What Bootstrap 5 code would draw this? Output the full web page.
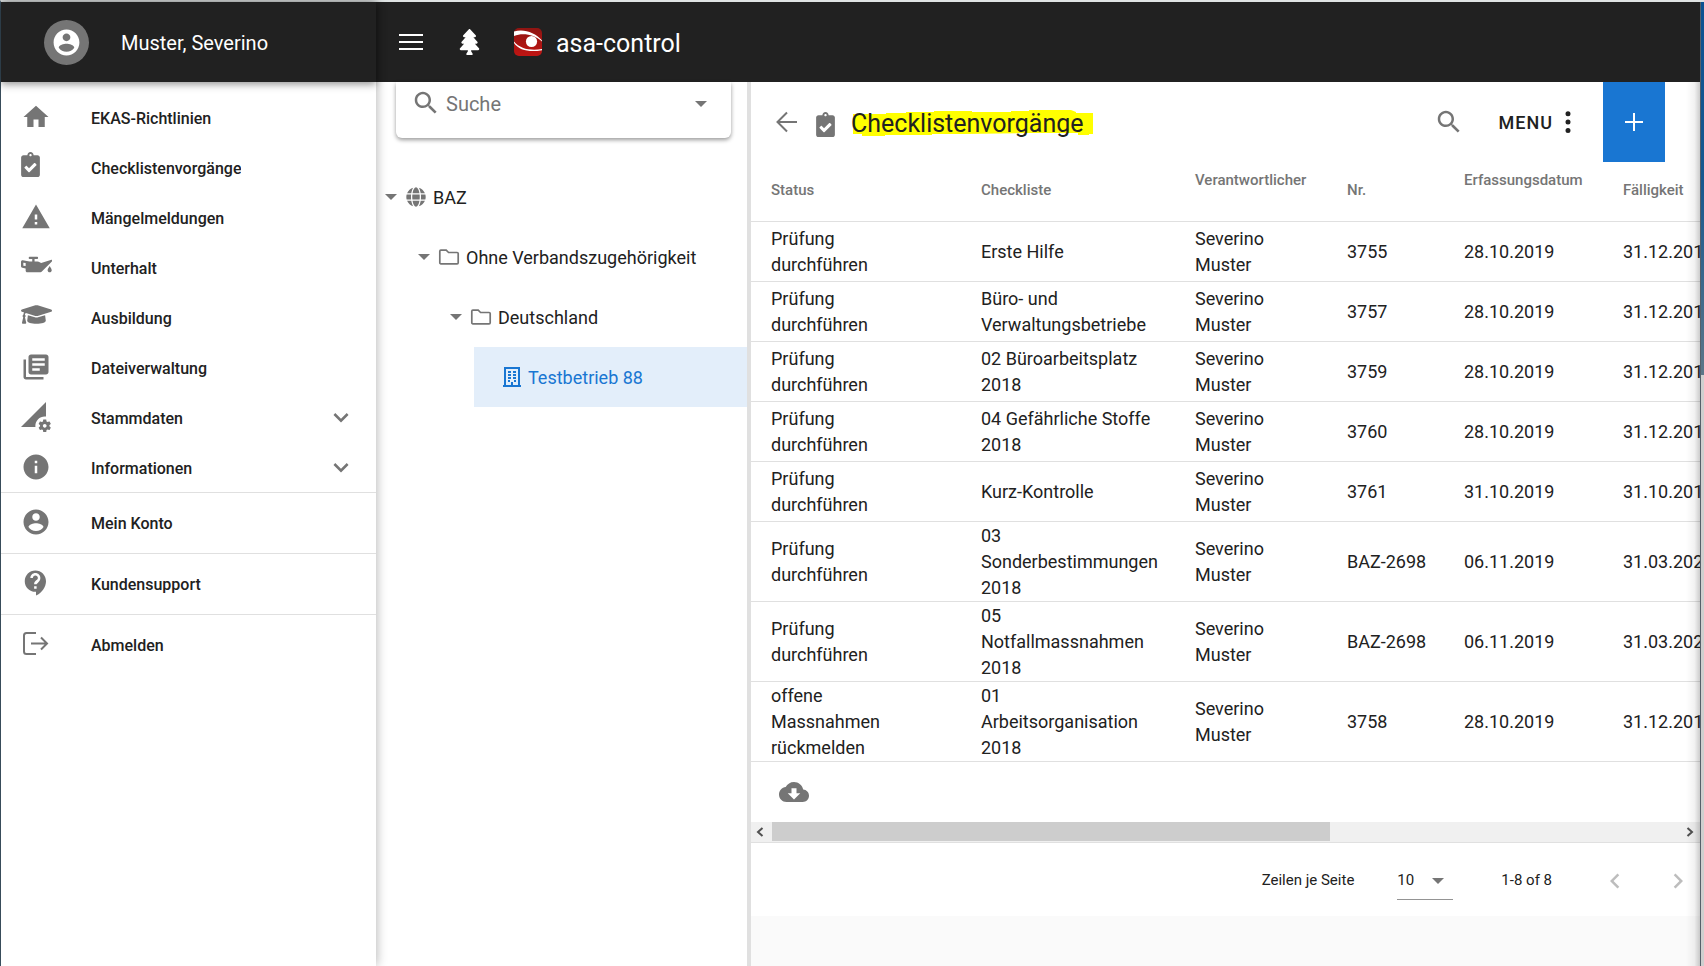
<!DOCTYPE html>
<html lang="de">
<head>
<meta charset="utf-8">
<meta name="viewport" content="width=device-width, initial-scale=1">
<title>asa-control – Checklistenvorgänge</title>
<link href="https://cdn.jsdelivr.net/npm/bootstrap@5.3.0/dist/css/bootstrap.min.css" rel="stylesheet">
<style>
:root { --ink: #212121; --muted: #757575; --rule: #e0e0e0; --accent: #1976d2; }
body { font-family: Roboto, sans-serif; color: var(--ink); background: #fafafa; overflow-x: hidden; }
svg { fill: currentColor; flex: none; display: block; }
button { font-family: inherit; color: inherit; }
.window-frame { min-height: 100vh; border-top: 2px solid #dfe3e3; border-left: 1px solid #3f5666; }
.desktop-edge { width: 4px; border-left: 1px solid #56606a; background: linear-gradient(#0d5191 0, #17588f 180px, #5c7688 373px, #cfcfcf 373px); }
.side-panel, .tree-panel { width: 375px; flex: none; background: #fff; }
.side-panel { z-index: 3; box-shadow: 1px 0 10px rgba(0,0,0,.28); }
.bar { height: 80px; background: #212121; color: #fff; flex: none; }
.side-bar { box-shadow: 0 2px 8px rgba(0,0,0,.45); }
.avatar { width: 45px; height: 45px; background: var(--muted); margin-left: 43px; }
.user-name { font-size: 20px; margin-left: 32px; padding-top: 2px; }
.top-bar { padding-left: 23px; }
.brand-logo { margin-left: 10px; }
.app-name { font-size: 25px; padding-top: 3px; margin-left: 14px; }
.ico { color: var(--muted); }
.side-links { padding-top: 11px; }
.side-item { height: 50px; padding: 0 20px; gap: 40px; font-size: 16px; font-weight: 500; color: var(--ink); text-decoration: none; background: none; border: 0; width: 100%; text-align: left; }
.side-item.tall { height: 61px; border-top: 1px solid var(--rule); }
.side-item.tall:nth-of-type(7) { margin-top: -1px; }
.side-item .icon-cell { width: 30px; height: 32px; }
.side-item .caption { line-height: 18px; margin-top: 2px; }
.tree-panel { border-right: 4px solid var(--rule); }
.search-card { height: 56px; margin: 0 16px 29px 20px; padding: 0 15px; border-radius: 0 0 6px 6px; box-shadow: 0 2px 4px rgba(0,0,0,.4); }
.search-card label { margin-bottom: 14px; }
.search-card input { border: 0; outline: 0; background: none; font-size: 20px; padding: 0 0 12px 5px; min-width: 0; color: var(--ink); }
.search-card input::placeholder { color: var(--muted); opacity: 1; }
.caret { width: 0; height: 0; border: 6px solid transparent; border-top-color: var(--muted); border-bottom: 0; }
.search-card .caret { margin: 0 9px 13px 0; }
.tree-row { height: 60px; font-size: 18px; border: 0; background: none; padding: 0 0 0 9px; width: 100%; text-align: left; white-space: nowrap; }
.tree-row .caret { margin-right: 8px; }
.tree-row svg { margin-right: 6px; }
.level-2 { padding-left: 42px; }
.level-3 { padding-left: 74px; }
.level-4 { margin-left: 98px; width: auto; padding-left: 28px; background: #e3eefa; color: var(--accent); }
.main-panel { background: #fff; }
.title-bar { height: 80px; padding-left: 21px; }
.title-icon { margin-left: 14px; }
.title-text { font-size: 25px; font-weight: 400; line-height: 32px; margin: 4px 0 0 16px; }
.marker { position: absolute; left: 0; top: 0; width: 244px; height: 32px; fill: #ff0; z-index: -1; }
.menu-btn { font-size: 18px; font-weight: 500; letter-spacing: 1px; background: none; border: 0; padding: 0; margin: 0 20px 0 11px; }
.add-btn { width: 62px; height: 80px; background: var(--accent); color: #fff; border: 0; margin-right: 35px; }
.list-table { width: 1080px; table-layout: fixed; font-size: 18px; line-height: 26px; border-collapse: separate; border-spacing: 0; }
.list-table th { height: 60px; padding: 18px 0 0 20px; font-size: 15px; line-height: 20px; font-weight: 500; color: var(--muted); border-bottom: 1px solid var(--rule); vertical-align: top; }
.list-table th.upper { padding-top: 8px; }
.list-table td { height: 60px; padding: 0 0 0 20px; border-bottom: 1px solid var(--rule); vertical-align: middle; white-space: nowrap; }
.list-table tr.three td { height: 80px; }
.export-row { height: 60px; padding-left: 28px; }
.hscroll { height: 21px; background: #f0f0f0; border-bottom: 1px solid var(--rule); color: #505050; }
.hscroll-thumb { height: 19px; width: 61.5%; background: #cdcdcd; margin-bottom: 1px; }
.hscroll .end { width: 21px; height: 20px; }
.hscroll .end:first-child { padding-right: 3px; }
.pager { height: 73px; font-size: 15px; padding-top: 2px; }
.pager-size { margin: 0 48px 0 43px; }
.pager select { width: 56px; height: 38px; border: 0; border-bottom: 1px solid #949494; appearance: none; background: none; font-size: 15px; color: var(--ink); padding: 0; outline: 0; border-radius: 0; }
.pager .caret { position: absolute; right: 9px; top: 16px; pointer-events: none; }
.pager button { border: 0; background: none; padding: 0; color: #bdbdbd; }
.pager-next { margin: 0 7px 0 33px; }
.right-side { min-width: 0; }
.edge-shade { position: absolute; right: 0; top: 80px; bottom: 0; width: 14px; background: linear-gradient(to right, rgba(0,0,0,0), rgba(0,0,0,.05) 60%, rgba(0,0,0,.2)); pointer-events: none; }
</style>
</head>
<body>
<svg width="0" height="0" class="position-absolute" aria-hidden="true">
  <symbol id="clip" viewBox="0 0 384 512"><path d="M336 64h-80c0-35.300-28.700-64-64-64s-64 28.700-64 64H48C21.500 64 0 85.500 0 112v352c0 26.500 21.500 48 48 48h288c26.500 0 48-21.500 48-48V112c0-26.500-21.500-48-48-48zM192 40c13.300 0 24 10.700 24 24s-10.700 24-24 24-24-10.700-24-24 10.700-24 24-24zm121.200 231.800l-143 141.800c-4.700 4.700-12.300 4.600-17-.1l-82.600-83.300c-4.700-4.700-4.600-12.300.1-17L99.100 285c4.700-4.700 12.300-4.600 17 .1l46 46.400 106-105.200c4.700-4.700 12.300-4.600 17 .1l28.200 28.400c4.700 4.800 4.600 12.300-.1 17z"/></symbol>
  <symbol id="account" viewBox="0 0 24 24"><path d="M12 2C6.480 2 2 6.480 2 12s4.480 10 10 10 10-4.480 10-10S17.520 2 12 2zm0 3c1.660 0 3 1.340 3 3s-1.340 3-3 3-3-1.340-3-3 1.340-3 3-3zm0 14.200c-2.500 0-4.710-1.280-6-3.220.03-1.990 4-3.080 6-3.080 1.990 0 5.970 1.090 6 3.080-1.290 1.940-3.500 3.220-6 3.220z"/></symbol>
  <symbol id="search" viewBox="0 0 24 24"><path d="M15.500 14h-.79l-.28-.27C15.410 12.590 16 11.110 16 9.500 16 5.910 13.090 3 9.500 3S3 5.910 3 9.500 5.910 16 9.500 16c1.610 0 3.090-.59 4.230-1.570l.27.28v.79l5 4.990L20.490 19l-4.990-5zm-6 0C7.010 14 5 11.990 5 9.500S7.010 5 9.500 5 14 7.010 14 9.500 11.990 14 9.500 14z"/></symbol>
  <symbol id="down" viewBox="0 0 24 24"><path d="M7.410 8.090L12 12.670l4.590-4.580L18 9.500l-6 6-6-6z"/></symbol>
  <symbol id="left" viewBox="0 0 24 24"><path d="M15.410 7.410L14 6l-6 6 6 6 1.410-1.410L10.830 12z"/></symbol>
  <symbol id="right" viewBox="0 0 24 24"><path d="M10 6L8.590 7.410 13.170 12l-4.580 4.590L10 18l6-6z"/></symbol>
  <symbol id="folder" viewBox="0 0 22 22"><path d="M1.800 16.700V5.300c0-.7.400-1.100 1.100-1.100h5.300l2.400 2.300h8.500c.7 0 1.100.4 1.100 1.100v9.100c0 .7-.4 1.100-1.100 1.100H2.900c-.7 0-1.100-.4-1.100-1.100z" fill="none" stroke="currentColor" stroke-width="1.700"/></symbol>
</svg>

<div class="window-frame d-flex">
  <aside class="side-panel d-flex flex-column position-relative">
    <div class="bar side-bar d-flex align-items-center">
      <span class="avatar rounded-circle d-flex align-items-center justify-content-center"><svg width="31" height="31"><use href="#account"/></svg></span>
      <span class="user-name">Muster, Severino</span>
    </div>
    <nav class="side-links" aria-label="Hauptnavigation">
      <a href="#" class="side-item d-flex align-items-center"><span class="icon-cell ico d-flex"><svg width="30" height="30" viewBox="0 0 24 24"><path d="M10 20v-6h4v6h5v-8h3L12 3 2 12h3v8z"/></svg></span><span class="caption overflow-hidden">EKAS-Richtlinien</span></a>
      <a href="#" class="side-item d-flex align-items-center"><span class="icon-cell ico d-flex"><svg width="19" height="25"><use href="#clip"/></svg></span><span class="caption overflow-hidden">Checklistenvorgänge</span></a>
      <a href="#" class="side-item d-flex align-items-center"><span class="icon-cell ico d-flex"><svg width="30" height="30" viewBox="0 0 24 24"><path d="M1 21h22L12 2 1 21zm12-3h-2v-2h2v2zm0-4h-2v-4h2v4z"/></svg></span><span class="caption overflow-hidden">Mängelmeldungen</span></a>
      <a href="#" class="side-item d-flex align-items-center"><span class="icon-cell ico d-flex"><svg width="31" height="25" viewBox="0 0 640 512"><path d="M629.800 160.310L416 224l-50.490-25.240a64.070 64.070 0 0 0-28.620-6.760H280v-48h56c8.840 0 16-7.160 16-16v-16c0-8.840-7.160-16-16-16H176c-8.840 0-16 7.160-16 16v16c0 8.840 7.160 16 16 16h56v48h-56L37.720 166.860a31.900 31.900 0 0 0-5.790-.53C14.670 166.330 0 180.360 0 198.340v94.950c0 15.460 11.060 28.720 26.280 31.480L96 337.460V384c0 17.670 14.330 32 32 32h274.630c8.550 0 16.750-3.420 22.760-9.510l212.260-214.750c1.500-1.500 2.340-3.540 2.340-5.660V168c.01-5.310-5.080-9.150-10.190-7.690zM96 288.670l-48-8.730v-62.430l48 8.730v62.430zm453.330 84.660c0 23.560 19.100 42.670 42.670 42.670s42.670-19.100 42.670-42.670S592 288 592 288s-42.670 61.770-42.670 85.330z"/></svg></span><span class="caption overflow-hidden">Unterhalt</span></a>
      <a href="#" class="side-item d-flex align-items-center"><span class="icon-cell ico d-flex"><svg width="31" height="25" viewBox="0 0 640 512"><path d="M622.340 153.200L343.400 67.500c-15.200-4.670-31.600-4.670-46.790 0L17.660 153.200c-23.540 7.230-23.540 38.360 0 45.590l48.630 14.940c-10.670 13.190-17.230 29.280-17.880 46.900C38.780 266.150 32 276.110 32 288c0 10.780 5.680 19.850 13.860 25.650L20.330 428.530C18.110 438.520 25.710 448 35.940 448h56.110c10.240 0 17.840-9.480 15.620-19.470L82.140 313.650C90.320 307.850 96 298.780 96 288c0-11.570-6.470-21.250-15.660-26.870.76-15.020 8.440-28.300 20.690-36.720L296.600 284.500c9.060 2.780 26.440 6.250 46.790 0l278.950-85.700c23.550-7.240 23.550-38.360 0-45.600zM352.790 315.090c-28.530 8.760-52.840 3.920-65.590 0l-145.020-44.550L128 384c0 35.350 85.960 64 192 64s192-28.650 192-64l-14.180-113.470-145.030 44.560z"/></svg></span><span class="caption overflow-hidden">Ausbildung</span></a>
      <a href="#" class="side-item d-flex align-items-center"><span class="icon-cell ico d-flex"><svg width="30" height="30" viewBox="0 0 24 24"><path d="M4 6H2v14c0 1.100.9 2 2 2h14v-2H4V6zm16-4H8c-1.100 0-2 .9-2 2v12c0 1.100.9 2 2 2h12c1.100 0 2-.9 2-2V4c0-1.100-.9-2-2-2zm-1 9H9V9h10v2zm-4 4H9v-2h6v2zm4-8H9V5h10v2z"/></svg></span><span class="caption overflow-hidden">Dateiverwaltung</span></a>
      <button type="button" class="side-item d-flex align-items-center"><span class="icon-cell ico d-flex"><svg width="30" height="30" viewBox="0 0 24 24"><path d="M18.990 11.500c.34 0 .67.03 1 .07L20 0 0 20h11.560c-.04-.33-.07-.66-.07-1 0-4.140 3.360-7.500 7.500-7.500zm3.710 7.990c.02-.16.04-.32.04-.49 0-.17-.01-.33-.04-.49l1.060-.83c.09-.08.12-.21.06-.32l-1-1.730c-.06-.11-.19-.15-.31-.11l-1.240.5c-.26-.2-.54-.37-.85-.49l-.19-1.320c-.01-.12-.12-.21-.24-.21h-2c-.12 0-.23.09-.25.21l-.19 1.320c-.3.13-.59.29-.85.49l-1.240-.5c-.11-.04-.24 0-.31.11l-1 1.730c-.06.11-.04.24.06.32l1.060.83c-.02.16-.03.32-.03.49 0 .17.01.33.03.49l-1.060.83c-.09.08-.12.21-.06.32l1 1.730c.06.11.19.15.31.11l1.240-.5c.26.2.54.37.85.49l.19 1.320c.02.12.12.21.25.21h2c.12 0 .23-.09.25-.21l.19-1.320c.3-.13.59-.29.84-.49l1.250.5c.11.04.24 0 .31-.11l1-1.730c.06-.11.03-.24-.06-.32l-1.070-.83zm-3.710 1.010c-.83 0-1.500-.67-1.500-1.500s.67-1.500 1.500-1.500 1.500.67 1.500 1.500-.67 1.500-1.500 1.500z"/></svg></span><span class="caption overflow-hidden">Stammdaten</span><svg class="ico ms-auto" width="30" height="30"><use href="#down"/></svg></button>
      <button type="button" class="side-item d-flex align-items-center"><span class="icon-cell ico d-flex"><svg width="30" height="30" viewBox="0 0 24 24"><path d="M12 2C6.480 2 2 6.480 2 12s4.480 10 10 10 10-4.480 10-10S17.520 2 12 2zm1 15h-2v-6h2v6zm0-8h-2V7h2v2z"/></svg></span><span class="caption overflow-hidden">Informationen</span><svg class="ico ms-auto" width="30" height="30"><use href="#down"/></svg></button>
      <a href="#" class="side-item tall d-flex align-items-center"><span class="icon-cell ico d-flex"><svg width="30" height="30"><use href="#account"/></svg></span><span class="caption">Mein Konto</span></a>
      <a href="#" class="side-item tall d-flex align-items-center"><span class="icon-cell ico d-flex"><svg width="30" height="30" viewBox="0 0 24 24"><path d="M11.500 2C6.810 2 3 5.810 3 10.500S6.810 19 11.500 19h.5v3c4.860-2.340 8-7 8-11.500C20 5.810 16.190 2 11.500 2zm1 14.500h-2v-2h2v2zm.9-4.600c-.6.500-.9.700-.9 1.100h-2c0-3.250 3-3 3-5 0-1.100-.9-2-2-2s-2 .9-2 2h-2c0-2.210 1.790-4 4-4s4 1.790 4 4c0 2-1.300 2.900-2.100 3.900z"/></svg></span><span class="caption">Kundensupport</span></a>
      <a href="#" class="side-item tall d-flex align-items-center"><span class="icon-cell ico d-flex"><svg width="30" height="30" viewBox="0 0 30 30"><path d="M15 4H5.500C4 4 3 5 3 6.500v16C3 24 4 25 5.500 25H15M10 14.500h16M20 8.500l6 6-6 6" fill="none" stroke="currentColor" stroke-width="2"/></svg></span><span class="caption">Abmelden</span></a>
    </nav>
  </aside>

  <div class="right-side flex-grow-1 d-flex flex-column position-relative">
    <header class="bar top-bar d-flex align-items-center">
      <button type="button" class="btn p-0 border-0 text-white me-4" aria-label="Menü ein- oder ausblenden"><svg width="24" height="18" viewBox="0 0 24 18"><path d="M0 1h24v2H0zM0 8h24v2H0zM0 15h24v2H0z"/></svg></button>
      <button type="button" class="btn p-0 border-0 text-white ms-2 ps-1 me-4" aria-label="Baum anzeigen"><svg width="21" height="26" viewBox="0 0 384 512"><path d="M378.310 378.490L298.420 288h30.630c9.010 0 16.980-5 20.780-13.060 3.800-8.040 2.550-17.260-3.280-24.050L268.420 160h28.890c9.100 0 17.300-5.350 20.860-13.610 3.520-8.130 1.860-17.590-4.240-24.080L203.660 4.830c-6.030-6.450-17.280-6.450-23.320 0L70.060 122.310c-6.100 6.490-7.750 15.950-4.240 24.080C69.380 154.650 77.590 160 86.690 160h28.890l-78.140 90.910c-5.810 6.780-7.060 15.990-3.270 24.040C37.970 283 45.930 288 54.950 288h30.630L5.690 378.490c-6 6.790-7.360 16.090-3.560 24.260 3.750 8.050 12 13.250 21.010 13.250H160v24.450l-30.290 48.400c-5.320 10.640 2.420 23.160 14.310 23.160h95.960c11.890 0 19.630-12.520 14.310-23.160L224 440.450V416h136.860c9.010 0 17.260-5.200 21.010-13.250 3.800-8.170 2.440-17.470-3.560-24.260z"/></svg></button>
      <svg class="brand-logo" width="28" height="28" viewBox="0 0 28 28" role="img" aria-label="asa-control Logo">
        <defs><linearGradient id="red" x2="0" y2="1"><stop stop-color="#8f1512"/><stop offset="1" stop-color="#c01513"/></linearGradient></defs>
        <rect width="28" height="28" rx="5" fill="url(#red)"/>
        <path d="M0 13.500C6 21 17 23 28 21v1.200C16 24.500 5 22.500 0 15z" fill="#fff"/>
        <path d="M0 3.500C10 .5 21 4.500 28 12.500v1C20 6.500 9 4.500 0 8z" fill="#fff"/>
        <circle cx="17.500" cy="13.500" r="5.600" fill="#fff"/>
      </svg>
      <span class="app-name">asa-control</span>
    </header>

    <div class="d-flex flex-grow-1">
      <section class="tree-panel" aria-label="Betriebe">
        <div class="search-card d-flex align-items-center">
          <label for="q" class="ico" aria-label="Suche"><svg width="30" height="30"><use href="#search"/></svg></label>
          <input id="q" class="flex-grow-1" type="text" placeholder="Suche">
          <span class="caret"></span>
        </div>
        <button type="button" class="tree-row d-flex align-items-center"><span class="caret"></span><svg class="ico" width="22" height="20" viewBox="0 0 496 512"><path d="M336.500 160C322 70.700 287.800 8 248 8s-74 62.700-88.500 152h177zM152 256c0 22.200 1.200 43.500 3.300 64h185.300c2.100-20.500 3.300-41.800 3.300-64s-1.200-43.500-3.300-64H155.300c-2.100 20.500-3.300 41.800-3.300 64zm324.700-96c-28.600-67.900-86.500-120.400-158-141.600 24.400 33.800 41.200 84.700 50 141.600h108zM177.200 18.400C105.800 39.600 47.800 92.100 19.300 160h108c8.700-56.900 25.500-107.800 49.900-141.600zM487.400 192H372.700c2.100 21 3.300 42.500 3.300 64s-1.200 43-3.300 64h114.600c5.500-20.500 8.600-41.800 8.600-64s-3.100-43.500-8.500-64zM120 256c0-21.500 1.200-43 3.300-64H8.600C3.200 212.500 0 233.800 0 256s3.200 43.500 8.600 64h114.600c-2-21-3.200-42.500-3.200-64zm39.500 96c14.500 89.300 48.700 152 88.500 152s74-62.700 88.500-152h-177zm159.300 141.600c71.400-21.200 129.400-73.700 158-141.600h-108c-8.800 56.900-25.600 107.800-50 141.600zM19.300 352c28.600 67.900 86.500 120.400 158 141.600-24.400-33.800-41.200-84.700-50-141.600h-108z"/></svg>BAZ</button>
        <button type="button" class="tree-row level-2 d-flex align-items-center"><span class="caret"></span><svg class="ico" width="22" height="22"><use href="#folder"/></svg>Ohne Verbandszugehörigkeit</button>
        <button type="button" class="tree-row level-3 d-flex align-items-center"><span class="caret"></span><svg class="ico" width="22" height="22"><use href="#folder"/></svg>Deutschland</button>
        <div class="d-flex"><button type="button" class="tree-row level-4 flex-grow-1 d-flex align-items-center"><svg width="20" height="22" viewBox="0 0 20 22"><path d="M1 19h18v2H1zM2 1h16v18h-2V3H4v16H2z"/><path d="M6 5h3v2H6zM11 5h3v2h-3zM6 8h3v2H6zM11 8h3v2h-3zM6 11h3v2H6zM11 11h3v2h-3zM6 14h2v2H6zM12 14h2v2h-2zM9 16h2v3H9z"/></svg>Testbetrieb 88</button></div>
      </section>

      <main class="flex-grow-1 overflow-hidden">
        <div class="main-panel">
          <div class="title-bar d-flex align-items-center">
            <button type="button" class="btn p-0 border-0 ico" aria-label="Zurück"><svg width="30" height="30" viewBox="0 0 30 30"><path d="M25 15H6M15 5.500L5.500 15l9.500 9.500" fill="none" stroke="currentColor" stroke-width="2"/></svg></button>
            <svg class="title-icon ico mt-1" width="19" height="25"><use href="#clip"/></svg>
            <h1 class="title-text position-relative z-1"><svg class="marker" viewBox="0 0 244 32" aria-hidden="true"><path d="M2 6h33V5h20V4h28V3h38v1h39V3h18V2h42l5 2v1h11l6 0v21h-4v1h-11v-2h-50l-66 1h-30v1H34v1H11v-2H2z"/></svg>Checklistenvorgänge</h1>
            <button type="button" class="btn p-0 border-0 ico ms-auto me-4" aria-label="Suchen"><svg width="30" height="30"><use href="#search"/></svg></button>
            <button type="button" class="menu-btn d-flex align-items-center">MENU<svg width="30" height="30" viewBox="0 0 24 24"><path d="M12 7.300a2 2 0 1 0 0-4 2 2 0 0 0 0 4zm0 2.700a2 2 0 1 0 0 4 2 2 0 0 0 0-4zm0 6.700a2 2 0 1 0 0 4 2 2 0 0 0 0-4z"/></svg></button>
            <button type="button" class="add-btn d-flex align-items-center justify-content-center" aria-label="Neu"><svg width="18" height="18" viewBox="0 0 18 18"><path d="M8 0h2v8h8v2h-8v8H8v-8H0V8h8z"/></svg></button>
          </div>

          <div class="overflow-hidden">
            <table class="list-table">
              <colgroup><col style="width:210px"><col style="width:214px"><col style="width:152px"><col style="width:117px"><col style="width:159px"><col></colgroup>
              <thead><tr><th>Status</th><th>Checkliste</th><th class="upper">Verantwortlicher</th><th>Nr.</th><th class="upper">Erfassungsdatum</th><th>Fälligkeit</th></tr></thead>
              <tbody>
                <tr><td>Prüfung<br>durchführen</td><td>Erste Hilfe</td><td>Severino<br>Muster</td><td>3755</td><td>28.10.2019</td><td>31.12.2019</td></tr>
                <tr><td>Prüfung<br>durchführen</td><td>Büro- und<br>Verwaltungsbetriebe</td><td>Severino<br>Muster</td><td>3757</td><td>28.10.2019</td><td>31.12.2019</td></tr>
                <tr><td>Prüfung<br>durchführen</td><td>02 Büroarbeitsplatz<br>2018</td><td>Severino<br>Muster</td><td>3759</td><td>28.10.2019</td><td>31.12.2019</td></tr>
                <tr><td>Prüfung<br>durchführen</td><td>04 Gefährliche Stoffe<br>2018</td><td>Severino<br>Muster</td><td>3760</td><td>28.10.2019</td><td>31.12.2019</td></tr>
                <tr><td>Prüfung<br>durchführen</td><td>Kurz-Kontrolle</td><td>Severino<br>Muster</td><td>3761</td><td>31.10.2019</td><td>31.10.2019</td></tr>
                <tr class="three"><td>Prüfung<br>durchführen</td><td>03<br>Sonderbestimmungen<br>2018</td><td>Severino<br>Muster</td><td>BAZ-2698</td><td>06.11.2019</td><td>31.03.2020</td></tr>
                <tr class="three"><td>Prüfung<br>durchführen</td><td>05<br>Notfallmassnahmen<br>2018</td><td>Severino<br>Muster</td><td>BAZ-2698</td><td>06.11.2019</td><td>31.03.2020</td></tr>
                <tr class="three"><td>offene<br>Massnahmen<br>rückmelden</td><td>01<br>Arbeitsorganisation<br>2018</td><td>Severino<br>Muster</td><td>3758</td><td>28.10.2019</td><td>31.12.2019</td></tr>
              </tbody>
            </table>
          </div>
          <div class="export-row d-flex align-items-center"><button type="button" class="btn p-0 border-0 ico" aria-label="Herunterladen"><svg width="30" height="30" viewBox="0 0 24 24"><path d="M19.350 10.040C18.670 6.590 15.640 4 12 4 9.110 4 6.600 5.640 5.350 8.040 2.340 8.360 0 10.910 0 14c0 3.310 2.690 6 6 6h13c2.760 0 5-2.240 5-5 0-2.640-2.050-4.780-4.650-4.960zM17 13l-5 5-5-5h3V9h4v4h3z"/></svg></button></div>
          <div class="hscroll d-flex align-items-center" aria-hidden="true">
            <span class="end d-flex align-items-center justify-content-center"><svg width="8" height="10" viewBox="0 0 8 10"><path d="M6.500 1L2 5l4.500 4" fill="none" stroke="currentColor" stroke-width="2"/></svg></span>
            <div class="flex-grow-1"><div class="hscroll-thumb"></div></div>
            <span class="end d-flex align-items-center justify-content-center"><svg width="8" height="10" viewBox="0 0 8 10"><path d="M1.500 1L6 5 1.500 9" fill="none" stroke="currentColor" stroke-width="2"/></svg></span>
          </div>
          <div class="pager d-flex align-items-center justify-content-end">
            <label for="rows">Zeilen je Seite</label>
            <span class="pager-size position-relative d-block"><select id="rows"><option>10</option></select><span class="caret"></span></span>
            <span>1-8 of 8</span>
            <button type="button" class="ms-5" aria-label="Vorherige Seite"><svg width="30" height="30"><use href="#left"/></svg></button>
            <button type="button" class="pager-next" aria-label="Nächste Seite"><svg width="30" height="30"><use href="#right"/></svg></button>
          </div>
        </div>
      </main>
    </div>
    <div class="edge-shade"></div>
  </div>
  <div class="desktop-edge flex-shrink-0"></div>
</div>
<script src="https://cdn.jsdelivr.net/npm/bootstrap@5.3.0/dist/js/bootstrap.bundle.min.js"></script>
</body>
</html>
